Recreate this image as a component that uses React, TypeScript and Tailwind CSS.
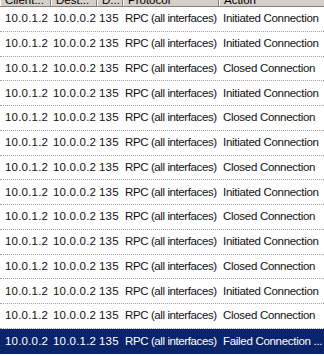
import React from "react";

type Row = { src: string; dst: string; port: string; proto: string; action: string; selected?: boolean };

const rows: Row[] = [
  { src: "10.0.1.2", dst: "10.0.0.2", port: "135", proto: "RPC (all interfaces)", action: "Initiated Connection" },
  { src: "10.0.1.2", dst: "10.0.0.2", port: "135", proto: "RPC (all interfaces)", action: "Initiated Connection" },
  { src: "10.0.1.2", dst: "10.0.0.2", port: "135", proto: "RPC (all interfaces)", action: "Closed Connection" },
  { src: "10.0.1.2", dst: "10.0.0.2", port: "135", proto: "RPC (all interfaces)", action: "Initiated Connection" },
  { src: "10.0.1.2", dst: "10.0.0.2", port: "135", proto: "RPC (all interfaces)", action: "Closed Connection" },
  { src: "10.0.1.2", dst: "10.0.0.2", port: "135", proto: "RPC (all interfaces)", action: "Initiated Connection" },
  { src: "10.0.1.2", dst: "10.0.0.2", port: "135", proto: "RPC (all interfaces)", action: "Closed Connection" },
  { src: "10.0.1.2", dst: "10.0.0.2", port: "135", proto: "RPC (all interfaces)", action: "Initiated Connection" },
  { src: "10.0.1.2", dst: "10.0.0.2", port: "135", proto: "RPC (all interfaces)", action: "Closed Connection" },
  { src: "10.0.1.2", dst: "10.0.0.2", port: "135", proto: "RPC (all interfaces)", action: "Initiated Connection" },
  { src: "10.0.1.2", dst: "10.0.0.2", port: "135", proto: "RPC (all interfaces)", action: "Closed Connection" },
  { src: "10.0.1.2", dst: "10.0.0.2", port: "135", proto: "RPC (all interfaces)", action: "Initiated Connection" },
  { src: "10.0.1.2", dst: "10.0.0.2", port: "135", proto: "RPC (all interfaces)", action: "Closed Connection" },
  { src: "10.0.0.2", dst: "10.0.1.2", port: "135", proto: "RPC (all interfaces)", action: "Failed Connection ...", selected: true },
];

const HeaderCell = ({ label, className }: { label: string; className: string }) => (
  <div className={`flex h-full items-end overflow-hidden border-r border-r-[#808080] shadow-[inset_1px_0_0_#ffffff] pl-[5px] ${className}`}>
    <span className="-mb-[1px] leading-[13px] whitespace-nowrap">{label}</span>
  </div>
);

export default function App() {
  return (
    <div className="w-[324px] h-[356px] overflow-hidden bg-white text-[11.5px] text-[#111]" style={{ fontFamily: '"Liberation Sans", Arial, sans-serif' }}>
      <div className="flex h-[7px] bg-[#d4d0c8] border-b border-b-[#808080] text-black">
        <HeaderCell label="Client..." className="w-[51px]" />
        <HeaderCell label="Dest..." className="w-[46px]" />
        <HeaderCell label="D..." className="w-[26px]" />
        <HeaderCell label="Protocol" className="w-[96px]" />
        <HeaderCell label="Action" className="flex-1 border-r-0" />
      </div>
      {rows.map((r, i) => (
        <div
          key={i}
          className={
            r.selected
              ? "flex items-center h-[24.75px] bg-[#0a246a] text-white"
              : "flex items-center h-[24.75px] border-b border-dotted border-b-[#a0a0a0]"
          }
        >
          <div className="w-[51px] pl-[5px] tracking-[0.2px] whitespace-nowrap">{r.src}</div>
          <div className="w-[46px] pl-[2px] tracking-[0.2px] whitespace-nowrap">{r.dst}</div>
          <div className="w-[26px] pl-[2px] tracking-[0.2px] whitespace-nowrap">{r.port}</div>
          <div className="w-[96px] pl-[2px] whitespace-nowrap overflow-hidden tracking-[-0.4px]">{r.proto}</div>
          <div className="flex-1 pl-[4px] pr-[4px] whitespace-nowrap overflow-hidden tracking-[-0.3px]">{r.action}</div>
        </div>
      ))}
    </div>
  );
}
